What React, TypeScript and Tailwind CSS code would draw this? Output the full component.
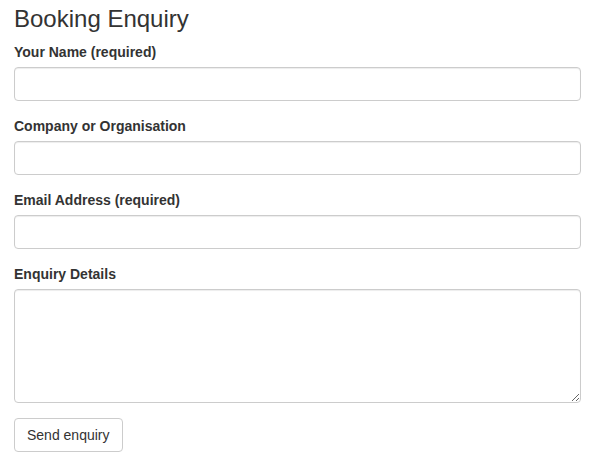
const fields = [
    { label: "Your Name (required)", type: "text" },
    { label: "Company or Organisation", type: "text" },
    { label: "Email Address (required)", type: "email" },
]

//Caixa de entrada no estilo bootstrap
const inputClass = "block w-full h-[34px] px-3 py-1.5 text-sm text-[#555] bg-white border border-[#ccc] rounded shadow-[inset_0_1px_1px_rgba(0,0,0,0.075)] outline-none"

export default function App() {

    return (

        <div className="bg-white min-h-screen pl-[14px] pr-2 text-[#333] text-sm leading-5 font-['Liberation_Sans',Arial,sans-serif]">

            <h3 className="pt-[6px] mb-[10px] text-2xl leading-[26px] font-normal">Booking Enquiry</h3>

            <form onSubmit={(e) => e.preventDefault()} className="w-[567px]">

                {fields.map((f) => (
                    <div key={f.label} className="mb-[15px]">
                        <label className="block mb-[5px] font-bold">{f.label}</label>
                        <input type={f.type} className={inputClass} />
                    </div>
                ))}

                {/*Detalhes da consulta*/}
                <div className="mb-[15px]">
                    <label className="block mb-[5px] font-bold">Enquiry Details</label>
                    <textarea rows={5} className="block w-full h-[114px] px-3 py-1.5 text-sm text-[#555] bg-white border border-[#ccc] rounded shadow-[inset_0_1px_1px_rgba(0,0,0,0.075)] outline-none" />
                </div>

                <button type="submit" className="h-[34px] px-3 py-1.5 text-sm leading-5 text-[#333] bg-white border border-[#ccc] rounded">
                    Send enquiry
                </button>

            </form>

        </div>

    )

}
